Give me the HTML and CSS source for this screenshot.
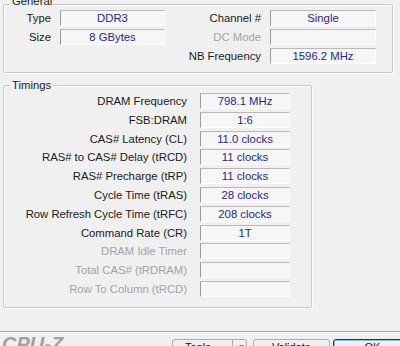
FILE: index.html
```html
<!DOCTYPE html>
<html lang="en">
<head>
  <meta charset="UTF-8">
  <title>CPU-Z Memory</title>
  <link rel="stylesheet" href="styles.css">
</head>
<body>
  <div class="window">

    <!-- General -->
    <div class="group general">
      <span class="legend">General</span>
      <div class="general-grid">
        <span class="label">Type</span>
        <span class="field">DDR3</span>
        <span class="label">Channel #</span>
        <span class="field">Single</span>

        <span class="label">Size</span>
        <span class="field">8 GBytes</span>
        <span class="label disabled">DC Mode</span>
        <span class="field"></span>

        <span></span>
        <span></span>
        <span class="label">NB Frequency</span>
        <span class="field">1596.2 MHz</span>
      </div>
    </div>

    <!-- Timings -->
    <div class="group timings">
      <span class="legend">Timings</span>
      <div class="timings-grid">
        <span class="label">DRAM Frequency</span>
        <span class="field">798.1 MHz</span>
        <span class="label">FSB:DRAM</span>
        <span class="field">1:6</span>
        <span class="label">CAS# Latency (CL)</span>
        <span class="field">11.0 clocks</span>
        <span class="label">RAS# to CAS# Delay (tRCD)</span>
        <span class="field">11 clocks</span>
        <span class="label">RAS# Precharge (tRP)</span>
        <span class="field">11 clocks</span>
        <span class="label">Cycle Time (tRAS)</span>
        <span class="field">28 clocks</span>
        <span class="label">Row Refresh Cycle Time (tRFC)</span>
        <span class="field">208 clocks</span>
        <span class="label">Command Rate (CR)</span>
        <span class="field">1T</span>
        <span class="label disabled">DRAM Idle Timer</span>
        <span class="field"></span>
        <span class="label disabled">Total CAS# (tRDRAM)</span>
        <span class="field"></span>
        <span class="label disabled">Row To Column (tRCD)</span>
        <span class="field"></span>
      </div>
    </div>

    <!-- Barra inferior -->
    <div class="footer">
      <span class="logo">CPU-Z</span>
      <div class="buttons">
        <button class="btn tools">Tools <span class="arrow">&#9662;</span></button>
        <button class="btn validate">Validate</button>
        <button class="btn ok">OK</button>
      </div>
    </div>

  </div>
</body>
</html>
```

FILE: styles.css
```css
/* Estilo geral */
body {
  margin: 0;
  background: #f0f0f0;
  font-family: 'Liberation Sans', Arial, sans-serif;
  font-size: 11.3px;
  color: #1a1a1a;
  overflow: hidden;
}

.window {
  width: 400px;
  height: 346px;
  overflow: hidden;
}

/* Caixas de grupo */
.group {
  position: relative;
  border: 1px solid #c9c9c9;
  box-shadow: inset 1px 1px 0 #fff, 1px 1px 0 #fff;
  border-radius: 2px;
}

.group .legend {
  position: absolute;
  left: 6px;
  top: -8px;
  padding: 0 2px;
  line-height: 14px;
  background: #f0f0f0;
  color: #1a1a1a;
}

.general {
  margin: 4px 7px 0 3px;
  padding: 5px 0 7px 0;
  height: 55px;
}

.general .legend {
  top: -11px;
}

.general-grid {
  display: grid;
  grid-template-columns: 56px 105px 105px 106px;
  grid-auto-rows: 16px;
  row-gap: 3px;
}

.timings {
  margin: 12px 0 0 3px;
  width: 309px;
  box-sizing: border-box;
  padding: 7px 21px 10px 0;
}

.timings-grid {
  display: grid;
  grid-template-columns: 1fr 90px;
  grid-auto-rows: 16px;
  row-gap: 2.8px;
  column-gap: 13px;
}

.general-grid .label {
  padding-right: 9px;
}

.label {
  text-align: right;
  line-height: 17px;
  white-space: nowrap;
}

.label.disabled {
  color: #a3a3a3;
}

/* Campos */
.field {
  box-sizing: border-box;
  height: 16px;
  line-height: 15px;
  text-align: center;
  color: #27278a;
  background: #f6f6f6;
  border-top: 1px solid #b9b9b9;
  border-left: 1px solid #9c9c9c;
  border-right: 1px solid #fff;
  border-bottom: 1px solid #fff;
}

/* Rodape */
.footer {
  margin-top: 23px;
  border-top: 1px solid #a6a6a6;
  box-shadow: inset 0 1px 0 #fff;
  display: flex;
  justify-content: space-between;
  height: 20px;
}

.logo {
  margin: 2px 0 0 2px;
  font-size: 20px;
  line-height: 20px;
  font-weight: bold;
  font-style: italic;
  color: #a2a2a2;
}

.buttons {
  display: flex;
  align-items: flex-start;
  padding-top: 7px;
  margin-right: -12px;
}

.btn {
  box-sizing: border-box;
  padding: 2px 0 9px;
  border: 1px solid #acacac;
  border-radius: 3px;
  background: linear-gradient(#f2f2f2, #e3e3e3);
  font-family: 'Liberation Sans', Arial, sans-serif;
  font-size: 11px;
  line-height: 11px;
  color: #1a1a1a;
  text-align: center;
}

.tools {
  width: 75px;
  position: relative;
  text-align: left;
  padding-left: 12px;
}

.tools .arrow {
  position: absolute;
  left: 59px;
  top: 0;
  height: 21px;
  width: 16px;
  border-left: 1px solid #acacac;
  line-height: 14px;
  text-align: center;
  font-size: 9px;
}

.validate {
  width: 77px;
  margin-left: 6px;
}

.ok {
  width: 79px;
  margin-left: 3px;
  border: 1px solid #333;
  box-shadow: inset 0 0 0 1px #8fc0e8;
}
```
